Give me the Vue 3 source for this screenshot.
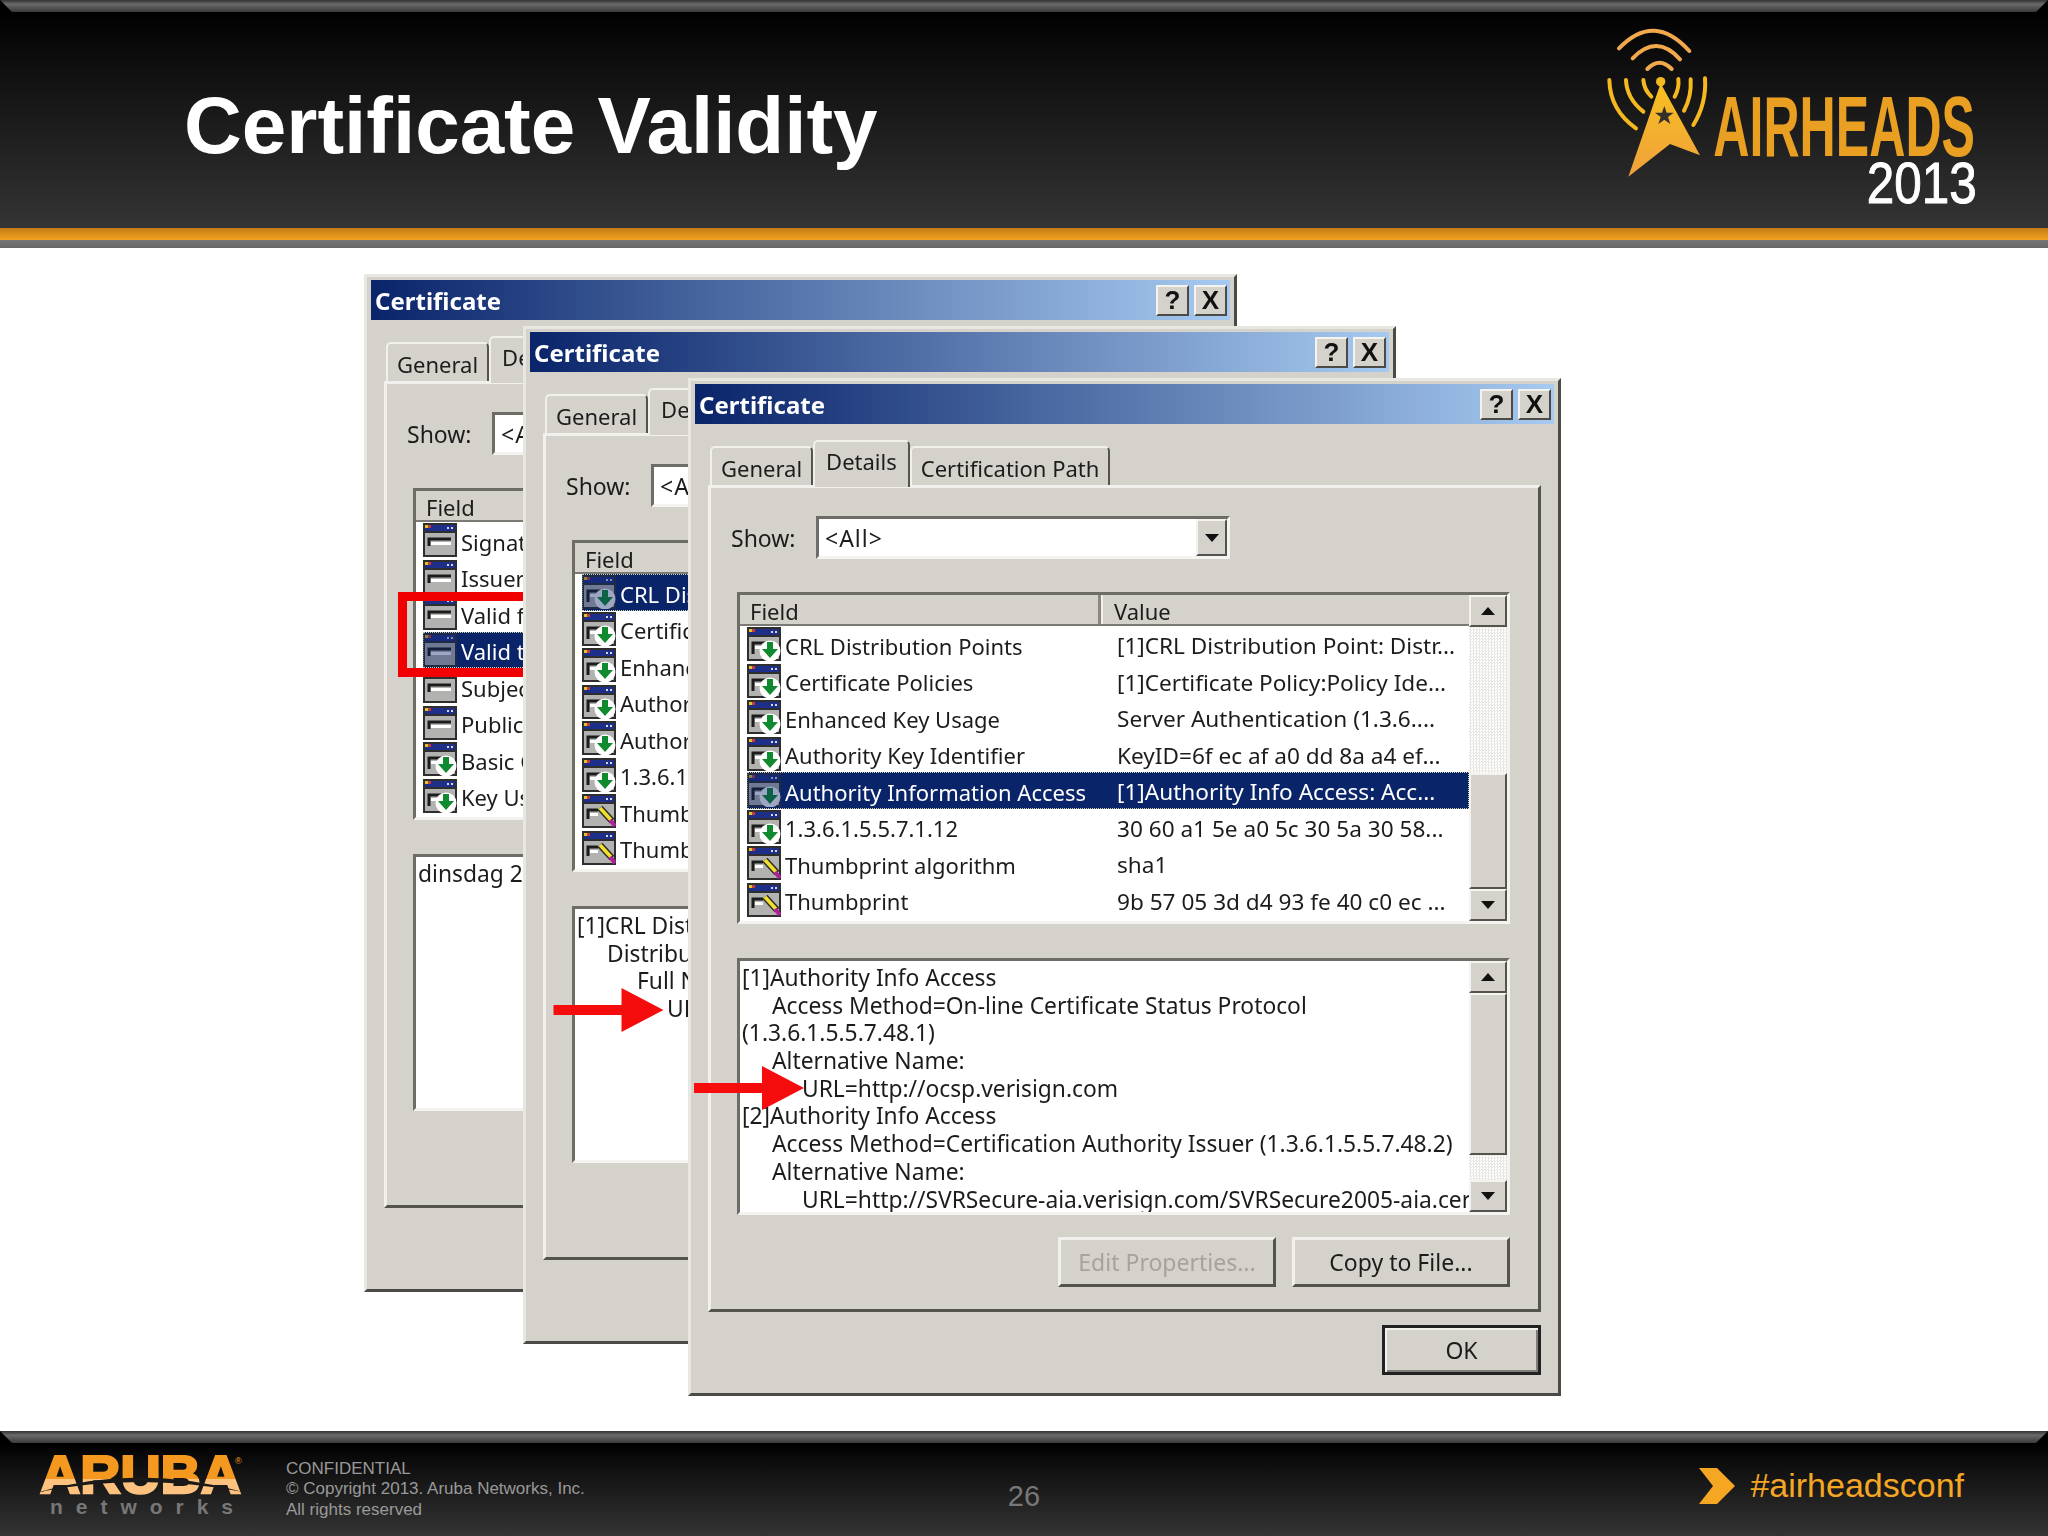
<script setup>
const certRows = [
  { icon: 'ext', field: 'CRL Distribution Points', value: '[1]CRL Distribution Point: Distr...' },
  { icon: 'ext', field: 'Certificate Policies', value: '[1]Certificate Policy:Policy Ide...' },
  { icon: 'ext', field: 'Enhanced Key Usage', value: 'Server Authentication (1.3.6....' },
  { icon: 'ext', field: 'Authority Key Identifier', value: 'KeyID=6f ec af a0 dd 8a a4 ef...' },
  { icon: 'ext', field: 'Authority Information Access', value: '[1]Authority Info Access: Acc...' },
  { icon: 'ext', field: '1.3.6.1.5.5.7.1.12', value: '30 60 a1 5e a0 5c 30 5a 30 58...' },
  { icon: 'pen', field: 'Thumbprint algorithm', value: 'sha1' },
  { icon: 'pen', field: 'Thumbprint', value: '9b 57 05 3d d4 93 fe 40 c0 ec ...' }
]

const windows = [
  {
    id: 1,
    left: 364,
    top: 26,
    selected: 3,
    mark: true,
    rows: [
      { icon: 'plain', field: 'Signature algorithm', value: '' },
      { icon: 'plain', field: 'Issuer', value: '' },
      { icon: 'plain', field: 'Valid from', value: '' },
      { icon: 'plain', field: 'Valid to', value: '' },
      { icon: 'plain', field: 'Subject', value: '' },
      { icon: 'plain', field: 'Public key', value: '' },
      { icon: 'ext', field: 'Basic Constraints', value: '' },
      { icon: 'ext', field: 'Key Usage', value: '' }
    ],
    lines: [{ level: 0, text: 'dinsdag 29' }]
  },
  {
    id: 2,
    left: 523,
    top: 78,
    selected: 0,
    arrow: 'arrow-two',
    rows: certRows,
    lines: [
      { level: 0, text: '[1]CRL Distribution Point:' },
      { level: 1, text: 'Distribution Point Name:' },
      { level: 2, text: 'Full Name:' },
      { level: 3, text: 'URL=http://SVRSecure-crl.verisign.com' }
    ]
  },
  {
    id: 3,
    left: 688,
    top: 130,
    selected: 4,
    arrow: 'arrow-three',
    rows: certRows,
    lines: [
      { level: 0, text: '[1]Authority Info Access' },
      { level: 1, text: 'Access Method=On-line Certificate Status Protocol' },
      { level: 0, text: '(1.3.6.1.5.5.7.48.1)' },
      { level: 1, text: 'Alternative Name:' },
      { level: 2, text: 'URL=http://ocsp.verisign.com' },
      { level: 0, text: '[2]Authority Info Access' },
      { level: 1, text: 'Access Method=Certification Authority Issuer (1.3.6.1.5.5.7.48.2)' },
      { level: 1, text: 'Alternative Name:' },
      { level: 2, text: 'URL=http://SVRSecure-aia.verisign.com/SVRSecure2005-aia.cer' }
    ]
  }
]
</script>

<template>
  <div class="slide">
    <header class="topbar">
      <div class="topbar-main">
        <h1 class="title">Certificate Validity</h1>
        <svg class="airheads" viewBox="0 0 1464 684">
          <defs>
            <linearGradient id="towerFill" x1="0" y1="0" x2="0" y2="1">
              <stop offset="0" stop-color="#f7c021" />
              <stop offset="1" stop-color="#f0a03c" />
            </linearGradient>
          </defs>
          <g fill="none" stroke="#f2a94c" stroke-width="12" stroke-linecap="round">
            <path d="M177 145 Q282 35 388 153" />
            <path d="M218 175 Q290 100 360 178" />
            <path d="M262 207 Q298 169 335 207" />
          </g>
          <g fill="none" stroke="#f5b81f" stroke-width="12" stroke-linecap="round">
            <path d="M148 240 Q150 330 228 385" />
            <path d="M198 240 Q200 295 250 335" />
            <path d="M250 240 Q252 268 274 290" />
            <path d="M435 235 Q440 310 400 375" />
            <path d="M392 238 Q395 290 372 332" />
            <path d="M355 237 Q358 265 344 290" />
          </g>
          <circle cx="302" cy="245" r="14" fill="#f5b81f" />
          <polygon points="302,250 420,466 330,432 205,530" fill="url(#towerFill)" />
          <polygon
            points="313,318 320,338 341,338 324,351 331,372 313,359 295,372 302,351 285,338 306,338"
            fill="#33302a"
          />
          <text class="logo-word" x="460" y="468" font-size="256" textLength="785" lengthAdjust="spacingAndGlyphs">AIRHEADS</text>
          <text class="logo-year" x="920" y="610" font-size="171" textLength="330" lengthAdjust="spacingAndGlyphs">2013</text>
        </svg>
      </div>
      <div class="stripe-orange"></div>
      <div class="stripe-gray"></div>
    </header>

    <main class="desktop">
      <section
        v-for="win in windows"
        :key="win.id"
        class="win"
        :style="{ left: win.left + 'px', top: win.top + 'px' }"
      >
        <div class="titlebar">
          <span class="titlebar-text">Certificate</span>
          <span class="cap-btn">?</span>
          <span class="cap-btn">X</span>
        </div>

        <div class="win-body">
          <div class="tabs">
            <span class="tab">General</span>
            <span class="tab tab-active">Details</span>
            <span class="tab">Certification Path</span>
          </div>

          <div class="panel">
            <div class="show-row">
              <span class="show-label">Show:</span>
              <div class="combo">
                <span class="combo-text">&lt;All&gt;</span>
                <span class="sb-btn combo-btn"><i class="tri-down"></i></span>
              </div>
            </div>

            <div class="list sunken">
              <div class="list-main">
                <div class="list-head">
                  <span class="head-field">Field</span>
                  <span class="head-value">Value</span>
                </div>
                <div
                  v-for="(row, i) in win.rows"
                  :key="row.field"
                  class="row"
                  :class="{ 'row-selected': i === win.selected }"
                >
                  <svg class="row-icon" viewBox="0 0 34 34">
                    <rect width="34" height="34" fill="#2e2e2e" />
                    <rect x="2" y="10" width="30" height="22" fill="#b2b2b0" />
                    <rect x="2" y="2" width="30" height="6" fill="#1d2f88" />
                    <rect x="2" y="2" width="3" height="3" fill="#e4c22e" />
                    <rect x="5" y="2" width="3" height="3" fill="#c73c3c" />
                    <rect x="24" y="4" width="2" height="2" fill="#d8d8d8" />
                    <rect x="28" y="4" width="2" height="2" fill="#d8d8d8" />
                    <template v-if="row.icon === 'plain'">
                      <path d="M6 23 V16 H28" fill="none" stroke="#1c1c1c" stroke-width="3" />
                      <rect x="8" y="19" width="20" height="3" fill="#fff" />
                    </template>
                    <template v-else-if="row.icon === 'ext'">
                      <path d="M6 27 V16 H20" fill="none" stroke="#1c1c1c" stroke-width="3" />
                      <rect x="8" y="19" width="10" height="3" fill="#fff" />
                      <circle cx="23" cy="24" r="10.5" fill="#fff" />
                      <polygon points="20,15 26,15 26,22 31,22 23,31 15,22 20,22" fill="#0f8a2e" />
                    </template>
                    <template v-else>
                      <path d="M6 25 V16 H16" fill="none" stroke="#1c1c1c" stroke-width="3" />
                      <rect x="8" y="19" width="8" height="3" fill="#fff" />
                      <path d="M18 14 L30 27" stroke="#2a2a2a" stroke-width="6.5" />
                      <path d="M18 14 L29 26" stroke="#f2e02a" stroke-width="3.6" />
                      <path d="M28 26 L33 32" stroke="#b0209a" stroke-width="4" />
                    </template>
                  </svg>
                  <span class="cell-field">{{ row.field }}</span>
                  <span class="cell-value">{{ row.value }}</span>
                </div>
              </div>
              <div class="scrollbar">
                <span class="sb-btn sb-end"><i class="tri-up"></i></span>
                <span class="sb-track"></span>
                <span class="sb-btn sb-thumb list-thumb"></span>
                <span class="sb-btn sb-end"><i class="tri-down"></i></span>
              </div>
              <!-- red frame round the two dates, first window only -->
              <div v-if="win.mark" class="date-mark"></div>
            </div>

            <div class="textbox sunken">
              <div class="textbox-main">
                <div
                  v-for="(line, i) in win.lines"
                  :key="i"
                  class="text-line"
                  :style="{ paddingLeft: line.level * 30 + 'px' }"
                >{{ line.text }}</div>
              </div>
              <div class="scrollbar">
                <span class="sb-btn sb-end"><i class="tri-up"></i></span>
                <span class="sb-btn sb-thumb text-thumb"></span>
                <span class="sb-track"></span>
                <span class="sb-btn sb-end"><i class="tri-down"></i></span>
              </div>
            </div>

            <div class="panel-actions">
              <span class="btn btn-disabled">Edit Properties...</span>
              <span class="btn">Copy to File...</span>
            </div>
          </div>

          <div class="ok-row">
            <span class="btn btn-ok">OK</span>
          </div>
        </div>

        <svg v-if="win.arrow" class="red-arrow" :class="win.arrow" viewBox="0 0 110 44">
          <path d="M0 17 H68 V0 L110 22 L68 44 V27 H0 Z" fill="#f50d0d" />
        </svg>
      </section>
    </main>

    <footer class="bottombar">
      <div class="foot-left">
        <svg class="aruba" viewBox="0 0 206 64">
          <defs>
            <linearGradient id="arubaFill" x1="0" y1="0" x2="0" y2="1">
              <stop offset="0.58" stop-color="#f5981f" />
              <stop offset="0.58" stop-color="#fdc27e" />
            </linearGradient>
          </defs>
          <text class="aruba-word" x="1" y="38" font-size="54" textLength="201" lengthAdjust="spacingAndGlyphs" fill="url(#arubaFill)" stroke="url(#arubaFill)">ARUBA</text>
          <path d="M0 37 Q100 8 204 37 Q100 17 0 37 Z" fill="#1c1a18" />
          <text class="aruba-reg" x="196" y="9" font-size="9">®</text>
          <text class="aruba-sub" x="11" y="59" font-size="21" textLength="183">networks</text>
        </svg>
        <div class="legal">
          <div>CONFIDENTIAL</div>
          <div>© Copyright 2013. Aruba Networks, Inc.</div>
          <div>All rights reserved</div>
        </div>
      </div>
      <div class="page-no">26</div>
      <div class="foot-right">
        <svg class="chevron" viewBox="0 0 36 36">
          <polygon points="0,0 18,0 36,18 18,36 0,36 14,18" fill="#f5a623" />
        </svg>
        <span class="hashtag">#airheadsconf</span>
      </div>
    </footer>
  </div>
</template>

<style scoped>
.slide {
  width: 2048px;
  height: 1536px;
  display: flex;
  flex-direction: column;
  background: #fff;
  overflow: hidden;
  font-family: "Liberation Sans", Arial, sans-serif;
}

/* header */
.topbar {
  flex: none;
  height: 248px;
}

.topbar-main {
  position: relative;
  height: 228px;
  display: flex;
  align-items: center;
  padding-left: 184px;
  box-sizing: border-box;
  background: linear-gradient(#000 5%, #0a0a0a 20%, #343434 100%);
}

.topbar-main::before {
  content: "";
  position: absolute;
  left: 0;
  right: 0;
  top: 0;
  height: 12px;
  background: linear-gradient(#333, #6a6a6a 35%, #3a3a3a);
  clip-path: polygon(0 0, 100% 0, calc(100% - 12px) 100%, 12px 100%);
}

.title {
  margin: 24px 0 0;
  color: #fff;
  font-size: 80px;
  font-weight: 700;
  line-height: 1;
}

.airheads {
  width: 488px;
  height: 228px;
  margin-left: auto;
  flex: none;
}

.logo-word {
  font-family: "Liberation Sans", Arial, sans-serif;
  font-weight: 700;
  fill: #e9a022;
}

.logo-year {
  font-family: "Liberation Sans", Arial, sans-serif;
  fill: #fff;
  stroke: #fff;
  stroke-width: 3;
}

.stripe-orange {
  height: 12px;
  background: linear-gradient(#c47a18, #f2a31f);
}

.stripe-gray {
  height: 8px;
  background: linear-gradient(#777, #666);
}

/* desktop with the overlapping dialogs */
.desktop {
  position: relative;
  flex: 1;
}

.win {
  position: absolute;
  width: 873px;
  height: 1018px;
  box-sizing: border-box;
  padding: 3px 4px;
  background: #d4d2cb;
  border: 3px solid;
  border-color: #e9e7e2 #4c4a47 #4c4a47 #e9e7e2;
  color: #1c1c1c;
  font-family: "Noto Sans", "Liberation Sans", sans-serif;
  font-size: 22px;
  filter: blur(0.4px);
}

.titlebar {
  height: 40px;
  display: flex;
  align-items: center;
  gap: 5px;
  padding: 0 3px 0 4px;
  background: linear-gradient(90deg, #0a246a, #a6caf0);
  color: #fff;
}

.titlebar-text {
  flex: 1;
  font-weight: 700;
  font-size: 24px;
}

.cap-btn {
  width: 33px;
  height: 31px;
  display: flex;
  align-items: center;
  justify-content: center;
  box-sizing: border-box;
  background: #d4d2cb;
  border: 2px solid;
  border-color: #f4f3f0 #4c4a47 #4c4a47 #f4f3f0;
  color: #111;
  font-family: "Liberation Sans", sans-serif;
  font-size: 26px;
  font-weight: 700;
}

.win-body {
  margin: 0 13px;
}

.tabs {
  height: 39px;
  margin-top: 22px;
  padding-left: 2px;
  display: flex;
  align-items: flex-end;
}

.tab {
  height: 39px;
  box-sizing: border-box;
  padding: 2px 9px 0;
  display: flex;
  align-items: center;
  border: 2px solid;
  border-color: #f1f0ec #55534e transparent #f1f0ec;
  border-bottom: 0;
  border-radius: 5px 5px 0 0;
}

.tab-active {
  position: relative;
  z-index: 1;
  height: 47px;
  margin-bottom: -2px;
  padding: 0 11px 8px;
  background: #d4d2cb;
}

.panel {
  height: 827px;
  box-sizing: border-box;
  border: 3px solid;
  border-color: #f1f0ec #55534e #55534e #f1f0ec;
}

.show-row {
  display: flex;
  align-items: center;
  margin: 28px 0 0 20px;
  font-size: 23px;
}

.show-label {
  width: 85px;
}

.combo {
  width: 414px;
  height: 43px;
  box-sizing: border-box;
  display: flex;
  justify-content: space-between;
  background: #fff;
  border: 3px solid;
  border-color: #6e6c66 #f4f3f0 #f4f3f0 #6e6c66;
}

.combo-text {
  padding-left: 6px;
  line-height: 38px;
  letter-spacing: 1px;
}

.combo-btn {
  width: 31px;
  flex: none;
}

.sunken {
  position: relative;
  display: flex;
  box-sizing: border-box;
  width: 773px;
  margin-left: 26px;
  background: #fff;
  border: 3px solid;
  border-color: #6e6c66 #f4f3f0 #f4f3f0 #6e6c66;
}

.list {
  height: 332px;
  margin-top: 33px;
}

.list-main,
.textbox-main {
  flex: 1;
  min-width: 0;
}

.list-head {
  height: 31px;
  display: flex;
  background: #d4d2cb;
  line-height: 32px;
  border-bottom: 2px solid #7c7a74;
  box-sizing: border-box;
}

.head-field {
  width: 361px;
  box-sizing: border-box;
  padding-left: 10px;
  border-right: 3px solid #8a8880;
}

.head-value {
  padding-left: 11px;
  border-left: 2px solid #f1f0ec;
}

.row {
  height: 36.5px;
  margin-left: 7px;
  display: flex;
  align-items: center;
  white-space: nowrap;
  overflow: hidden;
}

.row-icon {
  width: 34px;
  height: 34px;
  flex: none;
}

.row-selected {
  background: #0a246a;
  color: #fff;
  outline: 1px dotted #cfcfa8;
  outline-offset: -1px;
}

.row-selected .row-icon {
  opacity: 0.6;
}

.cell-field {
  width: 336px;
  flex: none;
  box-sizing: border-box;
  padding: 3px 0 0 4px;
}

.cell-value {
  padding-top: 3px;
  font-size: 22.6px;
}

.scrollbar {
  width: 38px;
  flex: none;
  display: flex;
  flex-direction: column;
  background: #d4d2cb;
}

.sb-btn {
  display: flex;
  align-items: center;
  justify-content: center;
  box-sizing: border-box;
  background: #d4d2cb;
  border: 2px solid;
  border-color: #f4f3f0 #55534e #55534e #f4f3f0;
}

.sb-end {
  height: 32px;
  flex: none;
}

.sb-track {
  flex: 1;
  background: repeating-conic-gradient(#e9e7e2 0 25%, #fff 0 50%) 0 0 / 3px 3px;
}

.sb-thumb {
  flex: none;
}

.list-thumb {
  height: 116px;
}

.text-thumb {
  height: 162px;
}

.tri-up,
.tri-down {
  width: 0;
  height: 0;
  border-left: 7px solid transparent;
  border-right: 7px solid transparent;
}

.tri-up {
  border-bottom: 8px solid #111;
}

.tri-down {
  border-top: 8px solid #111;
}

.date-mark {
  position: absolute;
  left: -18px;
  top: 101px;
  width: 260px;
  height: 85px;
  box-sizing: border-box;
  border: 9px solid #f00000;
}

.textbox {
  height: 257px;
  margin-top: 34px;
}

.textbox-main {
  padding: 3px 0 0 2px;
  white-space: nowrap;
  overflow: hidden;
  font-size: 22.8px;
}

.text-line {
  height: 27.7px;
  line-height: 28px;
}

.panel-actions {
  margin: 22px 28px 0 0;
  display: flex;
  justify-content: flex-end;
  gap: 16px;
  font-size: 23px;
}

.btn {
  width: 218px;
  height: 50px;
  box-sizing: border-box;
  display: flex;
  align-items: center;
  justify-content: center;
  border: 3px solid;
  border-color: #f1f0ec #55534e #55534e #f1f0ec;
}

.btn-disabled {
  color: #a5a39c;
}

.ok-row {
  margin-top: 13px;
  display: flex;
  justify-content: flex-end;
  font-size: 23px;
}

.btn-ok {
  width: 159px;
  border-color: #222;
  box-shadow: inset 2px 2px 0 #f1f0ec, inset -2px -2px 0 #807e78;
}

.red-arrow {
  position: absolute;
  width: 110px;
  height: 44px;
}

.arrow-two {
  left: 24px;
  top: 659px;
  width: 117px;
}

.arrow-three {
  left: 3px;
  top: 685px;
  width: 110px;
}

/* footer */
.bottombar {
  position: relative;
  flex: none;
  height: 105px;
  display: grid;
  grid-template-columns: 1fr auto 1fr;
  align-items: center;
  background: linear-gradient(#000 12%, #0a0a0a 25%, #343434 100%);
}

.bottombar::before {
  content: "";
  position: absolute;
  left: 0;
  right: 0;
  top: 0;
  height: 12px;
  background: linear-gradient(#333, #6a6a6a 35%, #3a3a3a);
  clip-path: polygon(0 0, 100% 0, calc(100% - 12px) 100%, 12px 100%);
}

.foot-left {
  display: flex;
  align-items: center;
  padding: 12px 0 0 39px;
}

.aruba {
  width: 206px;
  height: 64px;
  flex: none;
  margin-top: -4px;
}

.aruba-word {
  font-family: "Liberation Sans", Arial, sans-serif;
  font-weight: 700;
  stroke-width: 2.4;
}

.aruba-reg {
  font-family: "Liberation Sans", Arial, sans-serif;
  fill: #f5981f;
}

.aruba-sub {
  font-family: "Liberation Sans", Arial, sans-serif;
  font-weight: 700;
  fill: #777;
}

.legal {
  margin-left: 41px;
  color: #999;
  font-size: 17px;
  line-height: 20.3px;
}

.page-no {
  padding-top: 26px;
  color: #777;
  font-size: 29px;
}

.foot-right {
  display: flex;
  align-items: center;
  justify-content: flex-end;
  padding: 4px 84px 0 0;
  gap: 15px;
}

.chevron {
  width: 36px;
  height: 36px;
  flex: none;
}

.hashtag {
  color: #f5a623;
  font-size: 34px;
}
</style>

<style>
body {
  margin: 0;
}
</style>
